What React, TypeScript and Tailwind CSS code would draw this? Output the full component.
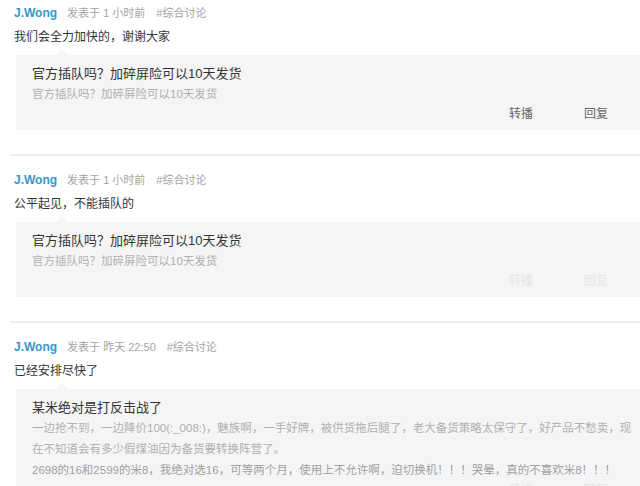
import React from "react";

type Post = {
  time: string;
  text: string;
  title: string;
  lines: { t: string; c: string }[];
  actionColor: string;
};

const posts: Post[] = [
  {
    time: "发表于 1 小时前",
    text: "我们会全力加快的，谢谢大家",
    title: "官方插队吗？加碎屏险可以10天发货",
    lines: [{ t: "官方插队吗？加碎屏险可以10天发货", c: "text-[#b0b0b0]" }],
    actionColor: "text-[#666]",
  },
  {
    time: "发表于 1 小时前",
    text: "公平起见，不能插队的",
    title: "官方插队吗？加碎屏险可以10天发货",
    lines: [{ t: "官方插队吗？加碎屏险可以10天发货", c: "text-[#b0b0b0]" }],
    actionColor: "text-[#e6e6e6]",
  },
  {
    time: "发表于 昨天 22:50",
    text: "已经安排尽快了",
    title: "某米绝对是打反击战了",
    lines: [
      {
        t: "一边抢不到，一边降价100(:_008:)，魅族啊，一手好牌，被供货拖后腿了，老大备货策略太保守了，好产品不愁卖，现",
        c: "text-[#b0b0b0]",
      },
      { t: "在不知道会有多少假煤油因为备货要转换阵营了。", c: "text-[#b0b0b0]" },
      {
        t: "2698的16和2599的米8，我绝对选16，可等两个月，使用上不允许啊，迫切换机！！！哭晕，真的不喜欢米8！！！",
        c: "text-[#a0a0a0]",
      },
    ],
    actionColor: "text-[#e6e6e6]",
  },
];

const PostItem = ({ post, first }: { post: Post; first: boolean }) => (
  <div className={`border-b-2 border-[#eeeeee] ml-[10px] ${first ? "pt-[3px]" : "pt-[14px]"} pb-[24px]`}>
    <div className="pl-[4px]">
      <div className="flex items-center h-5 gap-[10px]">
        <span className="text-[12px] font-bold text-[#3399cc]">J.Wong</span>
        <span className="text-[11px] text-[#a3a3a3] flex gap-[11px]">
          <span>{post.time}</span>
          <span>#综合讨论</span>
        </span>
      </div>
      <div className="h-5 mt-1 flex items-center text-[12px] text-[#333]">{post.text}</div>
      <div className="relative mt-2 ml-[2px] bg-[#f5f5f5] pt-[9px] pb-[5px] pl-[16px]">
        <div className="absolute -top-[6px] left-[40px] w-0 h-0 border-x-[6px] border-x-transparent border-b-[6px] border-b-[#f5f5f5]" />
        <div className="h-5 flex items-center text-[13px] text-[#333]">{post.title}</div>
        {post.lines.map((l, i) => (
          <div key={i} className={`h-[21px] flex items-center whitespace-nowrap text-[11.5px] ${l.c}`}>
            {l.t}
          </div>
        ))}
        <div className={`h-5 flex justify-end gap-[51px] pr-[32px] text-[12px] ${post.actionColor}`}>
          <span>转播</span>
          <span>回复</span>
        </div>
      </div>
    </div>
  </div>
);

export default function App() {
  return (
    <div
      className="w-[640px] h-[486px] overflow-hidden bg-white"
      style={{ fontFamily: '"Liberation Sans", "Noto Sans CJK SC", sans-serif' }}
    >
      {posts.map((p, i) => (
        <PostItem key={i} post={p} first={i === 0} />
      ))}
    </div>
  );
}
